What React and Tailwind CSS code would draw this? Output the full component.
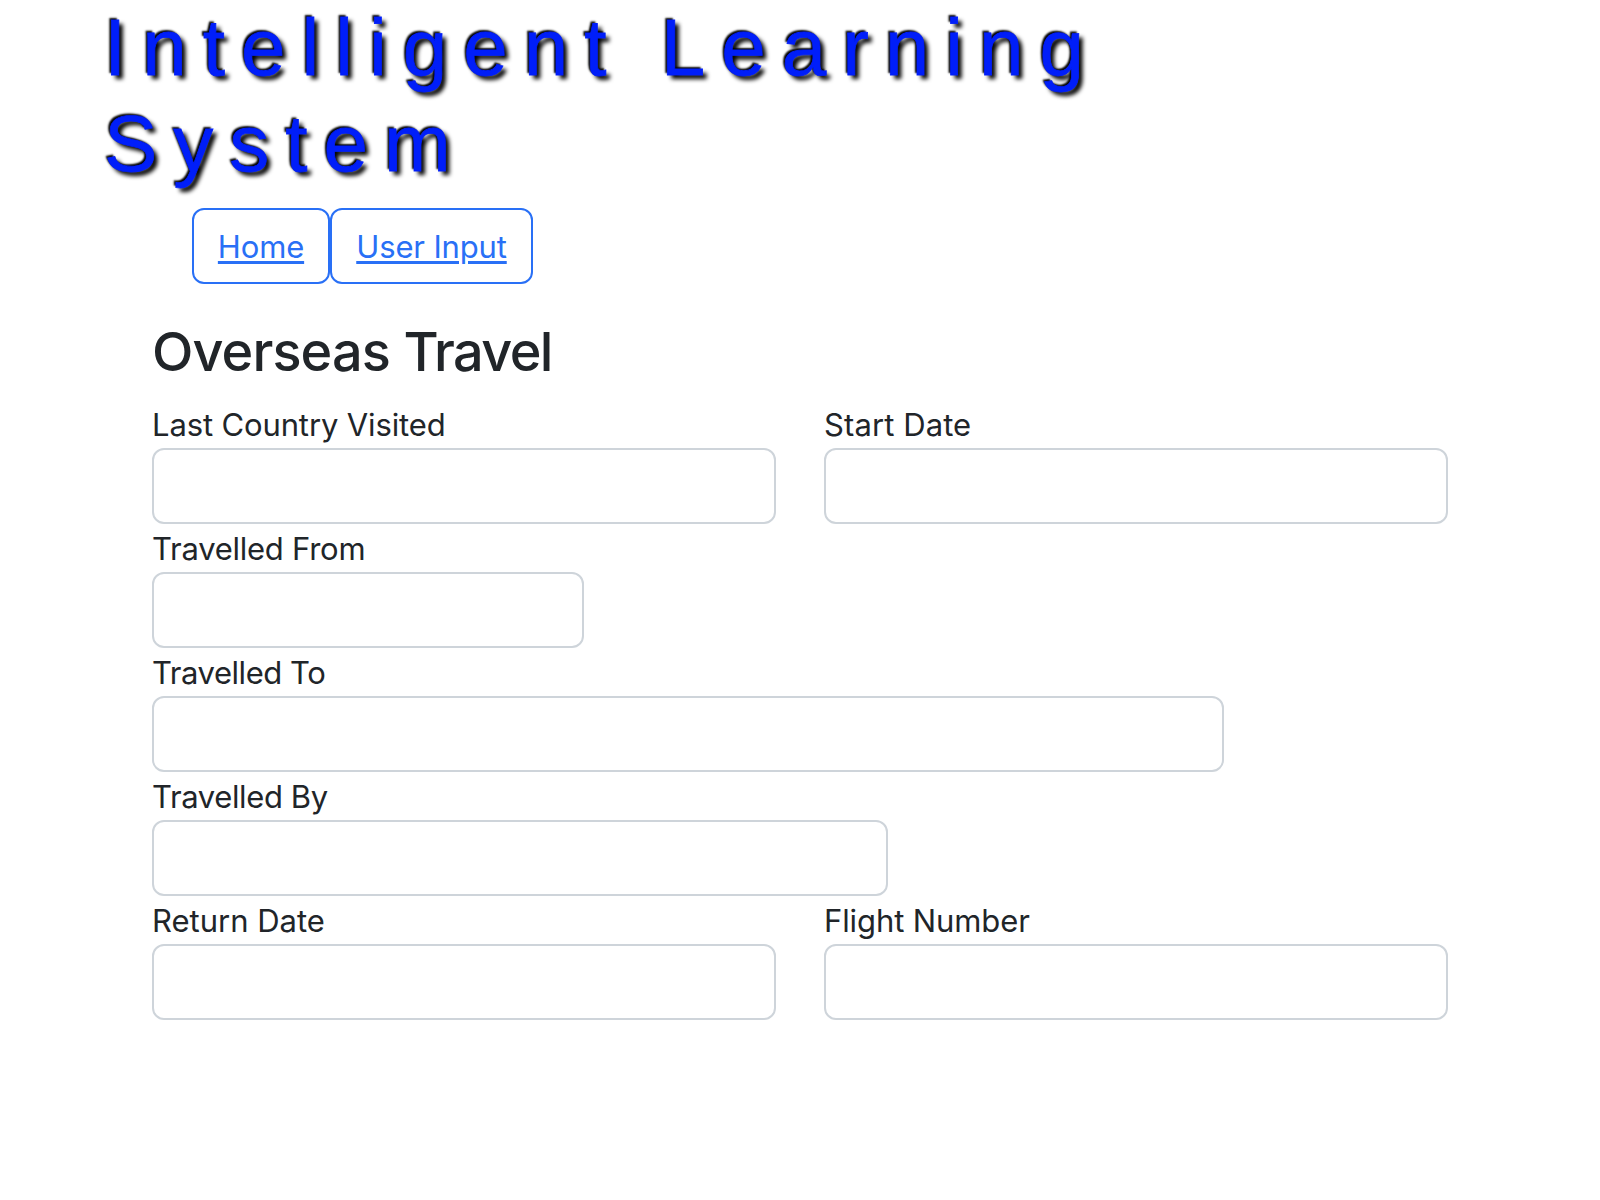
const INPUT = "block h-[76px] w-full rounded-xl border-2 border-[#ced4da] bg-white px-6 text-[32px] outline-none";

function Field({ label, width, tracking }) {
  return (
    <div className={width}>
      <label className={`block h-12 w-max pt-px text-[31px] leading-[48px] whitespace-nowrap ${tracking}`}>
        {label}
      </label>
      <input aria-label={label} className={INPUT} />
    </div>
  );
}

const LINK = "flex h-[76px] items-center justify-center rounded-xl border-2 border-[#2970f6] pt-0.5 text-[#2970f6] underline decoration-3 underline-offset-[3px] text-[31px] tracking-[-0.15px]";

export default function App() {
  return (
    <main className="h-[1200px] w-[1600px] overflow-hidden bg-white font-[Inter,sans-serif] text-[#212529]">
      <h1 className="h-[192px] w-[1200px] pl-[104px] font-['Liberation_Sans',sans-serif] text-[80px] leading-[96px] font-normal tracking-[16px] text-[#001ef9] [-webkit-text-stroke:0.8px_#001ef9] [text-shadow:-2px_-2px_2px_#000,4px_4px_4px_#000]">
        Intelligent Learning System
      </h1>
      <nav className="mt-4 ml-[192px] flex">
        <a className={`${LINK} w-[138px]`}>Home</a>
        <a className={`${LINK} w-[203px]`}>User Input</a>
      </nav>
      <form className="ml-[152px] w-[1296px] pt-8">
        <h2 className="mb-4 h-[68px] pt-0.5 text-[54px] leading-[68px] font-medium tracking-[-0.9px]">
          Overseas <span className="tracking-[-1.6px]">Travel</span>
        </h2>
        <div className="flex gap-12">
          <Field label="Last Country Visited" width="w-[624px]" tracking="tracking-[-0.13px]" />
          <Field label="Start Date" width="w-[624px]" tracking="tracking-[0.1px]" />
        </div>
        <Field label="Travelled From" width="w-[432px]" tracking="tracking-[-0.25px]" />
        <Field label="Travelled To" width="w-[1072px]" tracking="tracking-[-0.45px]" />
        <Field label="Travelled By" width="w-[736px]" tracking="tracking-[-0.37px]" />
        <div className="flex gap-12">
          <Field label="Return Date" width="w-[624px]" tracking="tracking-[0px]" />
          <Field label="Flight Number" width="w-[624px]" tracking="tracking-[-0.1px]" />
        </div>
      </form>
    </main>
  );
}
